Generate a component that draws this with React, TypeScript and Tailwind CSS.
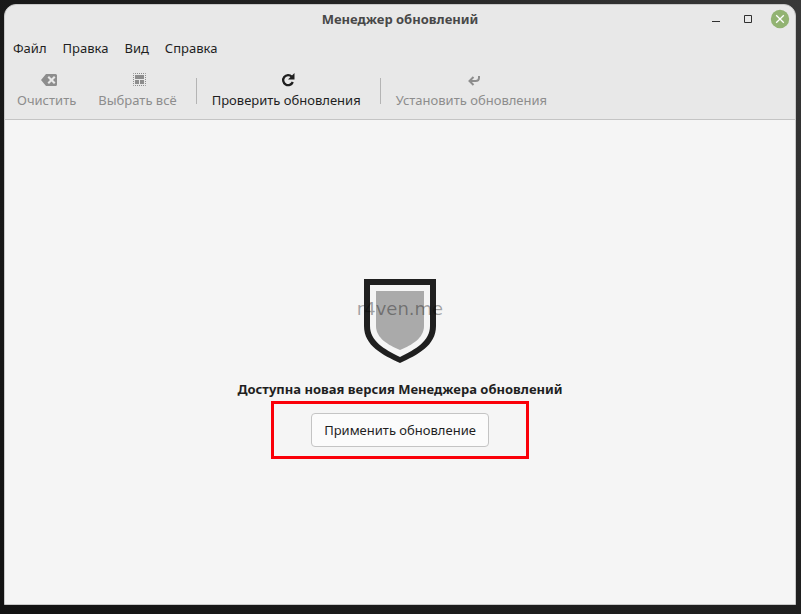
import React from 'react';

interface ToolButtonProps {
  label: string;
  disabled?: boolean;
  children: React.ReactNode;
}

const ToolButton: React.FC<ToolButtonProps> = ({ label, disabled, children }) => (
  <button
    type="button"
    disabled={disabled}
    className="flex flex-col items-center gap-0.5 px-[11px] text-[#1f1f1f] disabled:text-[#8d8d8d]"
  >
    <svg width="20" height="16" viewBox="0 0 20 16" fill="currentColor" aria-hidden="true">
      {children}
    </svg>
    <span className="whitespace-nowrap">{label}</span>
  </button>
);

const Separator = () => <div className="mr-1 ml-2 h-[26px] w-px bg-[#b4b4b4]" />;

const TitleBar = () => (
  <header className="grid h-7 grid-cols-[1fr_auto_1fr] items-center">
    <h1 className="col-start-2 font-bold text-[#484848]">Менеджер обновлений</h1>
    <div className="flex items-center justify-end gap-3 pr-[5px]">
      <button type="button" aria-label="Свернуть" className="flex size-5 items-center justify-center text-[#303030]">
        <svg width="20" height="20" viewBox="0 0 20 20" fill="currentColor">
          <path d="M6 12h8v1H6z" />
        </svg>
      </button>
      <button type="button" aria-label="Развернуть" className="flex size-5 items-center justify-center text-[#303030]">
        <svg width="20" height="20" viewBox="0 0 20 20" fill="none" stroke="currentColor">
          <path d="M6.5 6.5h7v7h-7z" />
        </svg>
      </button>
      <button type="button" aria-label="Закрыть" className="flex size-5 items-center justify-center">
        <svg width="20" height="20" viewBox="0 0 20 20">
          <circle cx="10" cy="10" r="9.2" fill="#92b372" />
          <path d="M6.2 6.2l7.6 7.6M13.8 6.2l-7.6 7.6" stroke="#fff" strokeWidth="1.3" />
        </svg>
      </button>
    </div>
  </header>
);

const menuItems = ['Файл', 'Правка', 'Вид', 'Справка'];

const MenuBar = () => (
  <nav className="flex h-[30px] items-center gap-4 px-2 text-[#1f1f1f]">
    {menuItems.map(item => (
      <button key={item} type="button">{item}</button>
    ))}
  </nav>
);

const ToolBar = () => (
  <div className="flex h-[57px] items-center border-b border-[#c4c4c4] pl-px">
    <ToolButton label="Очистить" disabled>
      <path
        fillRule="evenodd"
        d="M9 2h9.5Q20 2 20 3.5v9Q20 14 18.5 14H9L4 8zM10.5 5.5L13 8l-2.5 2.5L12 12l2.5-2.5L17 12l1.5-1.5L16 8l2.5-2.5L17 4l-2.5 2.5L12 4z"
      />
    </ToolButton>
    <ToolButton label="Выбрать всё" disabled>
      <path
        d="M6.5 1.5h12v12h-12z"
        fill="none"
        stroke="currentColor"
        strokeDasharray="1 1"
        strokeDashoffset="0.5"
      />
      <path d="M8 3h9v4H8zM8 8h4v4H8zM13 8h4v4h-4z" />
    </ToolButton>
    <Separator />
    <ToolButton label="Проверить обновления">
      <path d="M16.8 10A5 5 0 1 1 15.8 4.7" fill="none" stroke="currentColor" strokeWidth="2.3" />
      <path d="M18.5 1v6.5H12z" />
    </ToolButton>
    <Separator />
    <ToolButton label="Установить обновления" disabled>
      <path d="M18 4V5.5Q18 9 14.5 9H9.500" fill="none" stroke="currentColor" strokeWidth="2" />
      <path d="M12.500 5l-4 4 4 4" fill="none" stroke="currentColor" strokeWidth="2" />
    </ToolButton>
  </div>
);

const Shield = () => (
  <div className="relative">
    <svg width="72" height="84" viewBox="0 0 72 84" aria-hidden="true">
      <path
        fill="#1f1f1f"
        fillRule="evenodd"
        d="M0 0H72V47C72 67 53 76 36 84C19 76 0 67 0 47ZM6 6V47C6 62 20 70 36 78C52 70 66 62 66 47V6Z"
      />
      <path fill="#aaaaaa" d="M12 12H60V47C60 59 48 66 36 71C24 66 12 59 12 47Z" />
    </svg>
    <span className="absolute top-1/2 left-1/2 -translate-x-1/2 -translate-y-6 font-['DejaVu_Sans',sans-serif] text-lg leading-6 text-black/35">
      r4ven.me
    </span>
  </div>
);

export default function App() {
  return (
    <div className="flex min-h-screen flex-col bg-[#141414] bg-[radial-gradient(circle_at_top_right,#383838,#222222_50%,#121212)] pt-1 pr-[5px] pb-[9px] pl-1 font-['Noto_Sans',sans-serif] text-[13px] leading-5">
      <div className="flex grow flex-col overflow-hidden rounded-t-xl border border-[#c8c8c8] bg-[#e8e8e8]">
        <TitleBar />
        <MenuBar />
        <ToolBar />
        <main className="flex grow flex-col items-center justify-center bg-[#f5f5f5] pt-0.5 text-[#1f1f1f]">
          <Shield />
          <h2 className="mt-4 font-bold">Доступна новая версия Менеджера обновлений</h2>
          <div className="relative mt-3.5">
            <button type="button" className="rounded-sm border border-[#c4c4c4] bg-[#fbfbfb] px-3 py-1.5">
              Применить обновление
            </button>
            <div className="pointer-events-none absolute -inset-x-10 -inset-y-3 border-3 border-[#fa0008]" />
          </div>
        </main>
      </div>
    </div>
  );
}
